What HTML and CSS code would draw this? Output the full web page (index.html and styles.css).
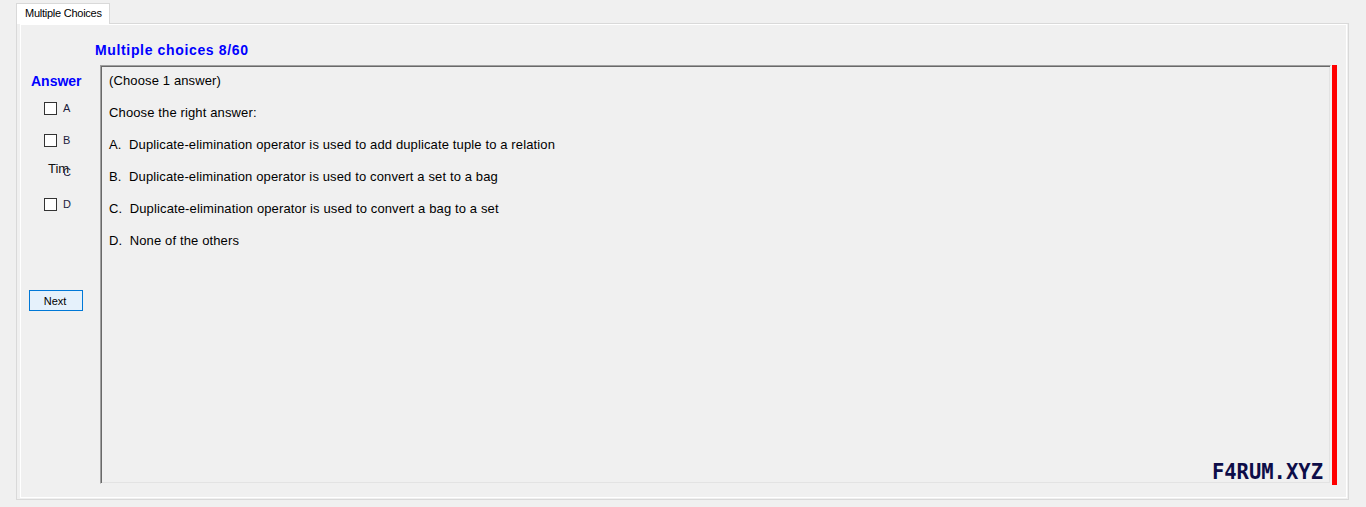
FILE: index.html
```html
<!DOCTYPE html>
<html>
<head>
<meta charset="utf-8">
<title>Multiple Choices</title>
<link rel="stylesheet" href="styles.css">
</head>
<body>
<div class="window">
  <div class="tabs"><div class="tab">Multiple Choices</div></div>
  <div class="panel">
    <div class="page">
      <div class="title">Multiple choices 8/60</div>
      <div class="main">
        <div class="side">
          <div class="answer">Answer</div>
          <div class="opt"><span class="box"></span><span class="lbl">A</span></div>
          <div class="opt"><span class="box"></span><span class="lbl">B</span></div>
          <div class="opt opt-c"><span class="box"></span><span class="lbl">C</span><span class="time">Tim</span></div>
          <div class="opt"><span class="box"></span><span class="lbl">D</span></div>
          <button class="next">Next</button>
        </div>
        <div class="qbox">
          <div class="line">(Choose 1 answer)</div>
          <div class="line">Choose the right answer:</div>
          <div class="line">A.  Duplicate-elimination operator is used to add duplicate tuple to a relation</div>
          <div class="line">B.  Duplicate-elimination operator is used to convert a set to a bag</div>
          <div class="line">C.  Duplicate-elimination operator is used to convert a bag to a set</div>
          <div class="line">D.  None of the others</div>
          <div class="mark">F4RUM.XYZ</div>
        </div>
        <div class="redbar"></div>
      </div>
    </div>
  </div>
</div>
</body>
</html>
```
FILE: styles.css
```css
* { box-sizing: border-box; }
html, body { margin: 0; padding: 0; }
body {
  background: #f0f0f0;
  font-family: "Liberation Sans", Arial, sans-serif;
  color: #000;
  width: 1366px;
  height: 507px;
  overflow: hidden;
}
.window { padding: 3px 17px 0 16px; }
.tabs { display: flex; height: 20px; }
.tab {
  position: relative;
  z-index: 1;
  width: 94px;
  height: 21px;
  background: #fff;
  border: 1px solid #d9d9d9;
  border-bottom: none;
  font-size: 11px;
  line-height: 17px;
  letter-spacing: -0.25px;
  padding: 1px 0 0 8px;
  color: #000;
}
.panel {
  height: 477px;
  border: 1px solid #d9d9d9;
  padding: 0 1px 1px 3px;
}
.page {
  height: 474px;
  border: 1px solid #fff;
  display: flex;
  flex-direction: column;
}
.title {
  margin: 17px 0 0 74px;
  font-size: 14px;
  line-height: 16px;
  font-weight: bold;
  color: #0000ff;
  letter-spacing: 0.65px;
}
.main {
  margin-top: 7px;
  display: flex;
  align-items: flex-start;
}
.side {
  width: 79px;
  padding-top: 8px;
  display: flex;
  flex-direction: column;
}
.answer {
  margin-left: 10px;
  font-size: 14px;
  line-height: 16px;
  font-weight: bold;
  color: #0000ff;
  margin-bottom: 3px;
}
.opt {
  height: 32px;
  display: flex;
  align-items: center;
  padding-left: 23px;
  position: relative;
}
.box {
  width: 13px;
  height: 13px;
  border: 1px solid #333;
  background: #fff;
  margin-right: 6px;
}
.lbl {
  font-size: 11px;
  color: #1c1c3c;
}
.time {
  position: absolute;
  left: 23px;
  top: 5px;
  width: 20px;
  height: 18px;
  padding-left: 4px;
  background: #f0f0f0;
  font-size: 13px;
  line-height: 15px;
  white-space: nowrap;
  color: #111;
}
.next {
  margin: 70px 0 0 8px;
  width: 54px;
  height: 21px;
  border: 1px solid #0078d7;
  background: #e5f1fb;
  font-family: "Liberation Sans", Arial, sans-serif;
  font-size: 11px;
  color: #000;
  padding: 0 2px 0 0;
}
.qbox {
  width: 1231px;
  height: 419px;
  border-top: 1px solid #a0a0a0;
  border-left: 1px solid #a0a0a0;
  border-right: 1px solid #f0f0f0;
  border-bottom: 1px solid #f0f0f0;
  box-shadow: inset 1px 1px 0 #696969, inset -1px -1px 0 #e3e3e3;
  padding: 5px 7px 1px 8px;
  display: flex;
  flex-direction: column;
}
.line {
  font-size: 13px;
  line-height: 20px;
  margin-bottom: 12px;
  letter-spacing: 0.13px;
  white-space: pre;
}
.mark {
  margin-top: auto;
  align-self: flex-end;
  font-family: "DejaVu Sans Mono", monospace;
  font-weight: bold;
  font-size: 20.5px;
  line-height: 20px;
  color: #0d0d48;
}
.redbar {
  width: 5px;
  height: 420px;
  margin-left: 1px;
  background: #ff0000;
}
```
